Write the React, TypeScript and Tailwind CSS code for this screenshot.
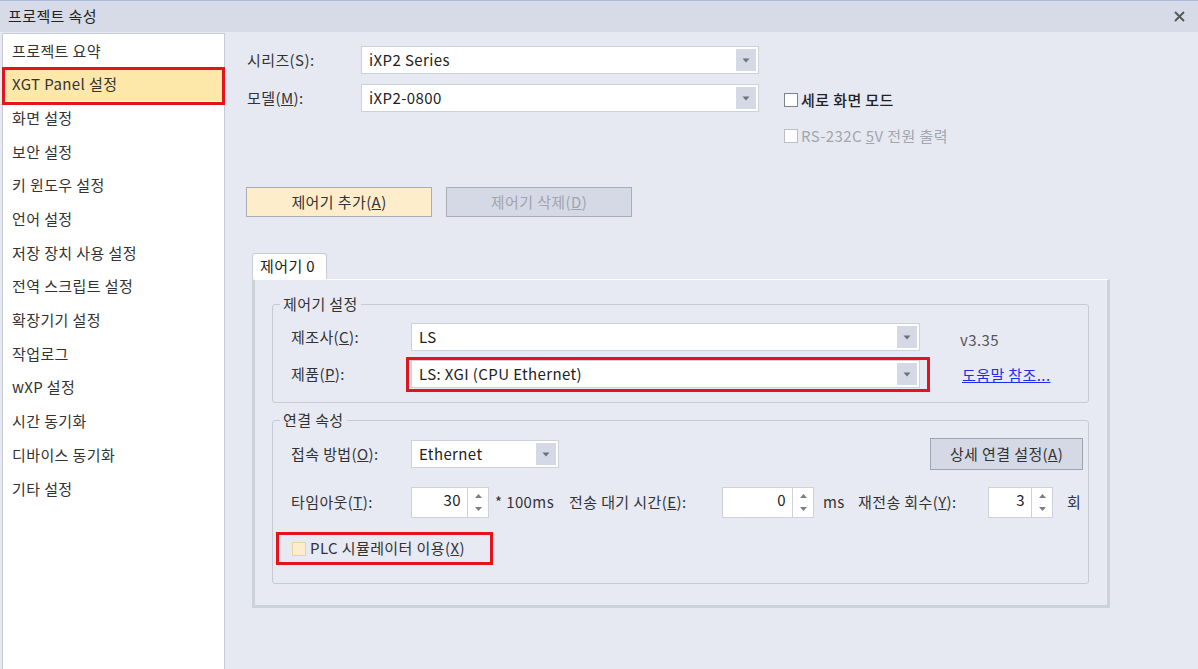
const font = "font-['Malgun_Gothic','Noto_Sans_CJK_KR','Noto_Sans',sans-serif] tracking-[0.4px]";

const navItems = [
  "프로젝트 요약",
  "XGT Panel 설정",
  "화면 설정",
  "보안 설정",
  "키 윈도우 설정",
  "언어 설정",
  "저장 장치 사용 설정",
  "전역 스크립트 설정",
  "확장기기 설정",
  "작업로그",
  "wXP 설정",
  "시간 동기화",
  "디바이스 동기화",
  "기타 설정",
];

const Caret = () => (
  <svg width="8" height="5" viewBox="0 0 8 5">
    <path d="M0.5 0.5h7L4 4.5z" fill="#6f7178" />
  </svg>
);

const Arrow = ({ up }: { up?: boolean }) => (
  <svg width="7" height="4" viewBox="0 0 7 4">
    <path d={up ? "M0 4h7L3.5 0z" : "M0 0h7L3.5 4z"} fill="#7b7e86" />
  </svg>
);

const Combo = ({ value, className }: { value: string; className: string }) => (
  <div className={`flex h-[28px] items-stretch border border-[#cdd1da] bg-white p-[2px] ${className}`}>
    <span className="flex flex-1 items-center pl-[5px] text-[15px] text-[#222]">{value}</span>
    <span className="flex w-[20px] items-center justify-center bg-[#d5d9e5]">
      <Caret />
    </span>
  </div>
);

const Spin = ({ value, className }: { value: string; className: string }) => (
  <div className={`flex h-[31px] border border-[#cdd1da] bg-white ${className}`}>
    <span className="flex-1 pr-[6px] pt-[1px] text-right text-[15px] text-[#222]">{value}</span>
    <span className="flex w-[21px] flex-col items-center justify-center gap-[9px] border-l border-[#cdd1da]">
      <Arrow up />
      <Arrow />
    </span>
  </div>
);

const Check = ({ tone = "plain" }: { tone?: "plain" | "off" | "warm" }) => (
  <span
    className={
      tone === "warm"
        ? "h-[14px] w-[14px] shrink-0 border border-[#ecd39a] bg-[#fdedcc]"
        : tone === "off"
          ? "h-[14px] w-[14px] shrink-0 border border-[#b9bdc6] bg-white"
          : "h-[14px] w-[14px] shrink-0 border border-[#7d828c] bg-white"
    }
  />
);

const Label = ({ children, w }: { children: React.ReactNode; w: string }) => (
  <span className={`shrink-0 text-[15px] text-[#333] ${w}`}>{children}</span>
);

export default function App() {
  return (
    <div className={`flex h-[669px] w-[1198px] flex-col overflow-hidden bg-[#e6e9f2] ${font}`}>
      {/* title bar */}
      <div className="flex h-[32px] shrink-0 items-center justify-between border-t border-[#a9bbd8] bg-[#d6dbe7] pl-[8px] pr-[13px]">
        <span className="text-[15px] text-[#222]">프로젝트 속성</span>
        <svg width="11" height="11" viewBox="0 0 11 11">
          <path d="M1 1l9 9M10 1l-9 9" stroke="#555" strokeWidth="1.8" />
        </svg>
      </div>

      <div className="flex flex-1">
        {/* sidebar */}
        <div className="ml-[2px] mt-[1px] w-[223px] shrink-0 border border-b-0 border-[#c7cbd5] bg-white">
          {navItems.map((item, i) => (
            <div
              key={item}
              className={`relative flex h-[33.7px] items-center pl-[9px] text-[15px] text-[#333] ${i === 1 ? "bg-[#fde7a9]" : ""}`}
            >
              {item}
              {i === 1 && (
                <span className="absolute -bottom-[4px] -left-[1px] -right-[1px] -top-[1px] border-[3px] border-[#e3141d]" />
              )}
            </div>
          ))}
        </div>

        {/* content */}
        <div className="flex flex-col pl-[21px]">
          <div className="mt-[14px] flex">
            <div className="flex flex-col gap-[10px]">
              <div className="flex items-center">
                <Label w="w-[115px] pl-[1px]">시리즈(S):</Label>
                <Combo value="iXP2 Series" className="w-[398px]" />
              </div>
              <div className="flex items-center">
                <Label w="w-[115px] pl-[1px]">
                  모델(<span className="underline">M</span>):
                </Label>
                <Combo value="iXP2-0800" className="w-[398px]" />
              </div>
            </div>
            <div className="ml-[25px] flex flex-col gap-[16px] pt-[44px]">
              <div className="flex h-[20px] items-center gap-[3px]">
                <Check />
                <span className="text-[15px] font-medium text-[#222]">세로 화면 모드</span>
              </div>
              <div className="flex h-[20px] items-center gap-[3px]">
                <Check tone="off" />
                <span className="text-[15px] text-[#a2a6ae]">
                  RS-232C <span className="underline">5</span>V 전원 출력
                </span>
              </div>
            </div>
          </div>

          <div className="mt-[41px] flex gap-[14px]">
            <button className="h-[30px] w-[186px] border border-[#a9adb6] bg-[#fdedcb] text-[15px] text-[#333]">
              제어기 추가(<span className="underline">A</span>)
            </button>
            <button className="h-[30px] w-[186px] border border-[#a9adb6] bg-[#d5d9e5] text-[15px] text-[#a0a4ad]">
              제어기 삭제(<span className="underline">D</span>)
            </button>
          </div>

          {/* tab */}
          <div className="ml-[6px] mt-[36px] flex flex-col">
            <div className="flex h-[26px] w-[75px] items-center rounded-t-[3px] border border-b-0 border-[#c9cdd6] bg-white pl-[7px] text-[15px] text-[#222]">
              제어기 0
            </div>
            <div className="h-[329px] w-[858px] border-b-[3px] border-l-[3px] border-r-[3px] border-t border-b-[#cdd1dc] border-l-[#cdd1dc] border-r-[#cdd1dc] border-t-white bg-[#e7eaf3] pl-[17px]">
              <fieldset className="mt-[14px] w-[817px] rounded-[3px] border border-[#c6cad4] pb-[14px]">
                <legend className="ml-[7px] px-[3px] text-[15px] leading-[20px] text-[#333]">제어기 설정</legend>
                <div className="mt-[9px] flex gap-[40px] pl-[18px]">
                  <div className="flex flex-col gap-[9px]">
                    <div className="flex items-center">
                      <Label w="w-[120px]">
                        제조사(<span className="underline">C</span>):
                      </Label>
                      <Combo value="LS" className="w-[509px]" />
                    </div>
                    <div className="flex items-center">
                      <Label w="w-[120px]">
                        제품(<span className="underline">P</span>):
                      </Label>
                      <div className="relative">
                        <Combo value="LS: XGI (CPU Ethernet)" className="w-[509px]" />
                        <span className="absolute -bottom-[4px] -left-[5px] -right-[10px] -top-[3px] border-[3px] border-[#e3141d]" />
                      </div>
                    </div>
                  </div>
                  <div className="flex flex-col gap-[9px]">
                    <div className="flex h-[28px] items-center pt-[6px] text-[15px] text-[#555]">v3.35</div>
                    <div className="flex h-[28px] items-center pl-[2px] pt-[3px] text-[15px] text-[#1f2cf0] underline">
                      도움말 참조...
                    </div>
                  </div>
                </div>
              </fieldset>

              <fieldset className="mt-[7px] w-[817px] rounded-[3px] border border-[#c6cad4] pb-[18px]">
                <legend className="ml-[7px] px-[3px] text-[15px] leading-[20px] text-[#333]">연결 속성</legend>
                <div className="pl-[18px] pr-[5px]">
                  <div className="mt-[8px] flex h-[32px] items-center">
                    <Label w="w-[120px]">
                      접속 방법(<span className="underline">O</span>):
                    </Label>
                    <Combo value="Ethernet" className="w-[148px]" />
                    <button className="ml-auto h-[32px] w-[153px] border border-[#9fa4ae] bg-[#d5d9e5] text-[15px] text-[#333]">
                      상세 연결 설정(<span className="underline">A</span>)
                    </button>
                  </div>

                  <div className="mt-[17px] flex items-center">
                    <Label w="w-[120px]">
                      타임아웃(<span className="underline">T</span>):
                    </Label>
                    <Spin value="30" className="w-[78px]" />
                    <Label w="w-[80px] pl-[6px]">* 100ms</Label>
                    <Label w="w-[153px]">
                      전송 대기 시간(<span className="underline">E</span>):
                    </Label>
                    <Spin value="0" className="w-[92px]" />
                    <Label w="w-[44px] pl-[9px]">ms</Label>
                    <Label w="w-[130px]">
                      재전송 회수(<span className="underline">Y</span>):
                    </Label>
                    <Spin value="3" className="w-[65px]" />
                    <Label w="pl-[14px]">회</Label>
                  </div>

                  <div className="relative ml-[1px] mt-[14px] flex h-[33px] w-fit items-center gap-[4px]">
                    <Check tone="warm" />
                    <span className="text-[15px] text-[#333]">
                      PLC 시뮬레이터 이용(<span className="underline">X</span>)
                    </span>
                    <span className="absolute -left-[16px] top-0 h-[33px] w-[217px] border-[3px] border-[#e3141d]" />
                  </div>
                </div>
              </fieldset>
            </div>
          </div>
        </div>
      </div>
    </div>
  );
}
